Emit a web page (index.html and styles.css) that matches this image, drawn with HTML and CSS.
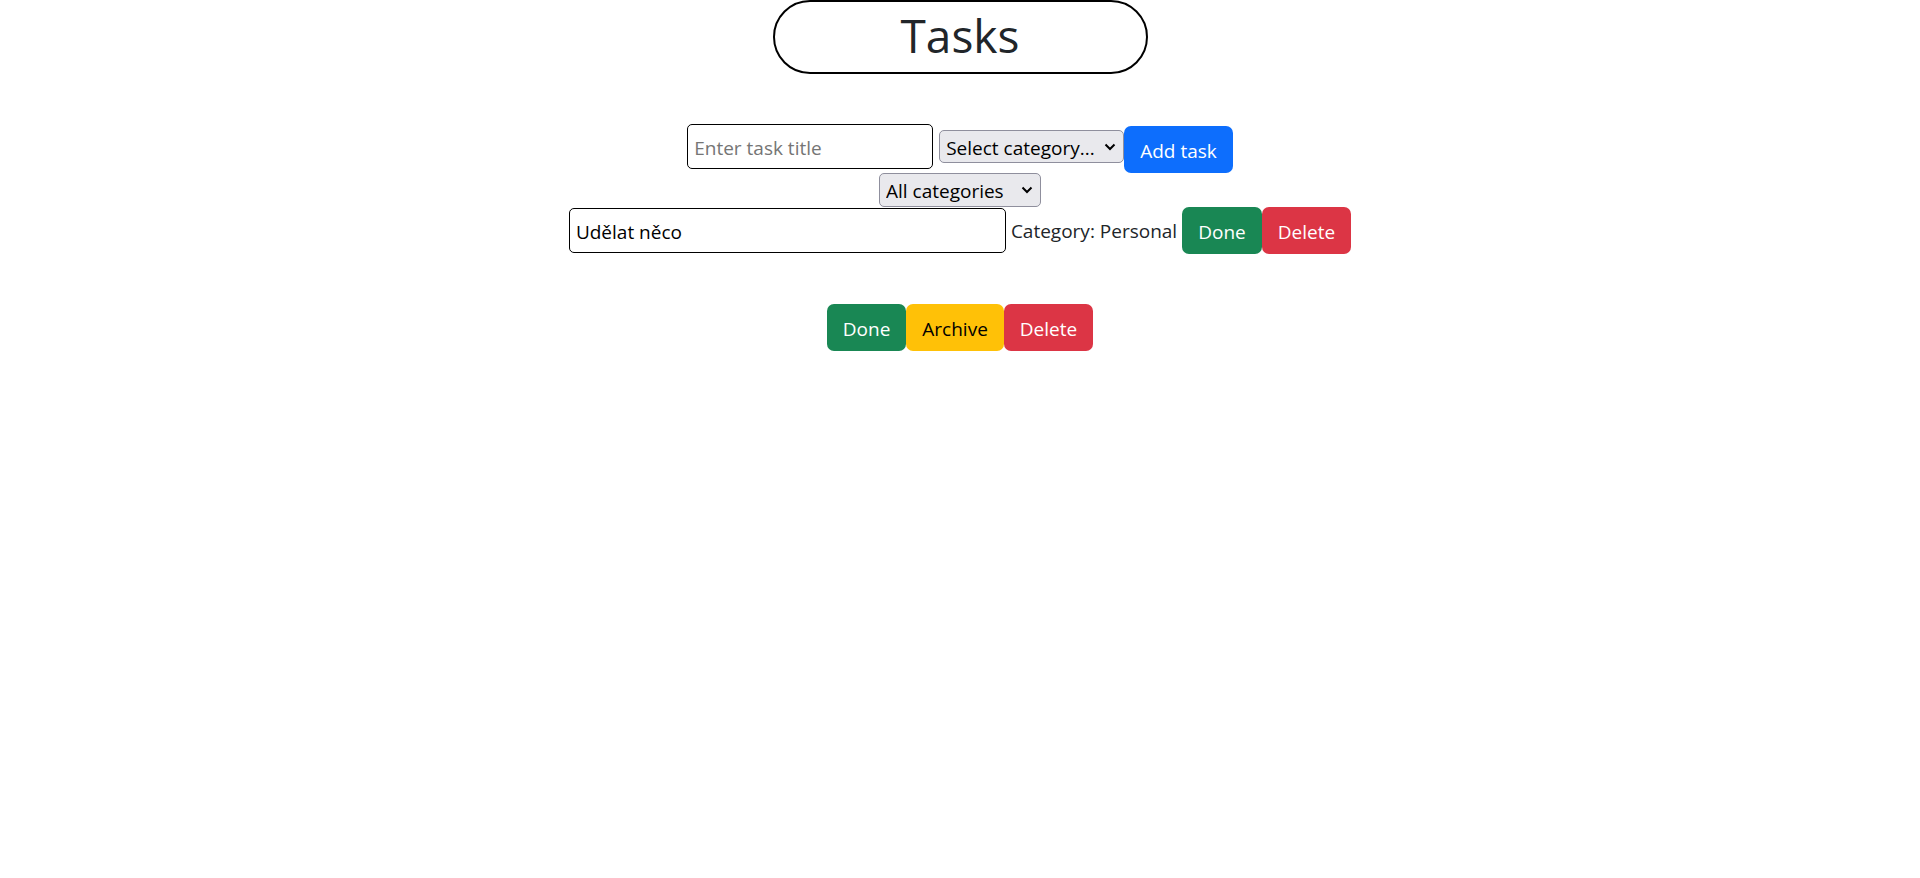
FILE: index.html
```html
<!DOCTYPE html>
<html lang="en">
<head>
<meta charset="utf-8">
<title>Tasks</title>
<link rel="stylesheet" href="styles.css">
</head>
<body>
<main class="page">
  <h1 class="title">Tasks</h1>
  <form class="row add-form">
    <input class="field field-new" type="text" placeholder="Enter task title" aria-label="Task title">
    <select class="select select-new" aria-label="Category">
      <option>Select category...</option>
      <option>Personal</option>
    </select>
    <button class="btn btn-primary" type="button">Add task</button>
  </form>
  <select class="select select-filter" aria-label="Filter by category">
    <option>All categories</option>
    <option>Personal</option>
  </select>
  <div class="row task">
    <input class="field field-task" type="text" value="Udělat něco" aria-label="Task">
    <span class="category">Category: Personal</span>
    <button class="btn btn-success" type="button">Done</button>
    <button class="btn btn-danger" type="button">Delete</button>
  </div>
  <div class="row actions">
    <button class="btn btn-success" type="button">Done</button>
    <button class="btn btn-warning" type="button">Archive</button>
    <button class="btn btn-danger" type="button">Delete</button>
  </div>
</main>
</body>
</html>
```
FILE: styles.css
```css
*, *::before, *::after { box-sizing: border-box; }

body {
  margin: 0;
  background: #fff;
  color: #212529;
  font-family: "Segoe UI", "Open Sans", "Noto Sans", sans-serif;
  font-size: 19px;
  line-height: 30px;
}

input, select, button { font: inherit; margin: 0; }

.page {
  display: flex;
  flex-direction: column;
  align-items: center;
}

.title {
  width: 375px;
  max-width: 100%;
  margin: 0 0 50px;
  padding: 5px 0 9px;
  border: 2px solid #000;
  border-radius: 40px;
  font-size: 46px;
  font-weight: 400;
  line-height: 56px;
  text-align: center;
}

.row {
  display: flex;
  align-items: center;
  justify-content: center;
}

.add-form { align-items: flex-start; }
.add-form .select { margin-top: 6px; }
.add-form .btn { margin-top: 2px; }

.field {
  height: 45px;
  padding: 2px 6px 0;
  border: 1px solid #000;
  border-radius: 5px;
  background: #fff;
  color: #000;
}
.field::placeholder { color: #757575; opacity: 1; }
.field-new { width: 246px; margin-right: 6px; }
.field-task { width: 437px; }

.select {
  appearance: none;
  height: 33px;
  padding: 2px 24px 0 6px;
  border: 1px solid #8f8f9d;
  border-radius: 5px;
  color: #000;
  background: #e9e9ed url("data:image/svg+xml,%3Csvg xmlns='http://www.w3.org/2000/svg' width='12' height='8'%3E%3Cpath d='M1.5 1.5 6 6 10.5 1.5' fill='none' stroke='%23000' stroke-width='2'/%3E%3C/svg%3E") no-repeat right 7px center;
}
.select-new { width: 185px; }
.select-filter { width: 162px; height: 34px; }

.category { margin: 0 5px; padding-top: 1px; }

.btn {
  height: 47px;
  padding: 2px 16px 0;
  border: 0;
  border-radius: 7px;
  color: #fff;
}
.btn-primary { background: #0d6efd; }
.btn-success { background: #198754; }
.btn-danger { background: #dc3545; }
.btn-warning { background: #ffc107; color: #000; }

.actions { margin-top: 50px; }
```
